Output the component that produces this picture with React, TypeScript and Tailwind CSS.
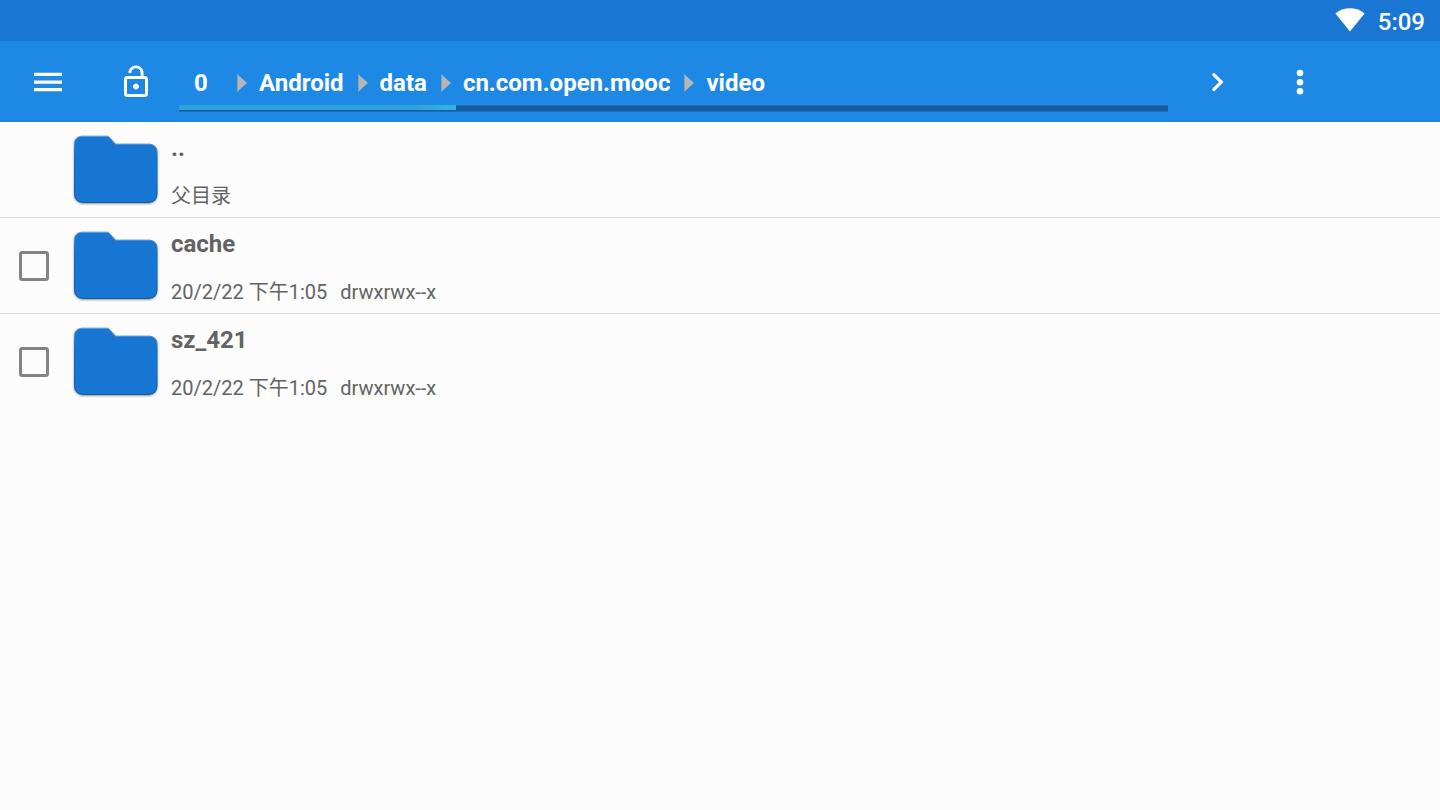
import { Fragment, useId, useState } from "react";

const crumbs = ["0", "Android", "data", "cn.com.open.mooc", "video"];

type Entry = { name: string; date?: string; mode?: string; note?: string };

const entries: Entry[] = [
  { name: "..", note: "父目录" },
  { name: "cache", date: "20/2/22 下午1:05", mode: "drwxrwx--x" },
  { name: "sz_421", date: "20/2/22 下午1:05", mode: "drwxrwx--x" },
];

function WifiIcon() {
  return (
    <svg className="h-6 w-8" viewBox="0 0 32 24" fill="#fff" aria-hidden="true">
      <path d="M1.4 5.6C5.4 2.1 10.5 0.3 16 0.3s10.6 1.8 14.6 5.3L16 23.4z" />
    </svg>
  );
}

function MenuIcon() {
  return (
    <svg className="h-9 w-9" viewBox="0 0 36 36" fill="#fff" aria-hidden="true">
      <path d="M4 8.7h28V12H4zM4 16.4h28v3.4H4zM4 24h28v3.3H4z" />
    </svg>
  );
}

function LockOpenIcon() {
  return (
    <svg className="h-9 w-9" viewBox="0 0 24 24" fill="#fff" aria-hidden="true">
      <path d="M12 17c1.1 0 2-.9 2-2s-.9-2-2-2-2 .9-2 2 .9 2 2 2zm6-9h-1V6c0-2.76-2.24-5-5-5S7 3.24 7 6h1.9c0-1.71 1.39-3.1 3.1-3.1 1.71 0 3.1 1.39 3.1 3.1v2H6c-1.1 0-2 .9-2 2v10c0 1.1.9 2 2 2h12c1.1 0 2-.9 2-2V10c0-1.1-.9-2-2-2zm0 12H6V10h12v10z" />
    </svg>
  );
}

function CrumbArrow() {
  return (
    <svg className="ml-[14px] mr-3 h-[18px] w-[10px] shrink-0" viewBox="0 0 10 18" aria-hidden="true">
      <path d="M0 0l10 9-10 9z" fill="#b4b6b8" />
      <path d="M0.5 0.5v17" stroke="#8f9fb0" strokeWidth="1" />
    </svg>
  );
}

function FolderIcon() {
  const id = useId();
  return (
    <svg className="h-[72px] w-[88px] shrink-0" viewBox="0 0 88 72" aria-hidden="true">
      <defs>
        <linearGradient id={`${id}edge`} x1="0" y1="0" x2="0" y2="1">
          <stop offset="0" stopColor="#5b9fe0" />
          <stop offset="0.3" stopColor="#1a6cc4" />
          <stop offset="1" stopColor="#135499" />
        </linearGradient>
        <filter id={`${id}shadow`} x="-5%" y="-5%" width="110%" height="115%">
          <feDropShadow dx="0" dy="1" stdDeviation="1" floodColor="#000" floodOpacity="0.4" />
        </filter>
      </defs>
      <path
        d="M9.500 2.200H35q1.300 0 2.200 1L43.600 10.200H78q7 1 7 8v41.500q0 8-8 8.800H10.500q-8-.8-8-8.800V10q0-7 7-7.800z"
        fill="#1976d2"
        stroke={`url(#${id}edge)`}
        strokeWidth="1"
        filter={`url(#${id}shadow)`}
      />
    </svg>
  );
}

function StatusBar() {
  return (
    <div className="flex h-[41px] items-center justify-end gap-3 bg-[#1976d2] pr-[15px]">
      <div className="pb-[2px]">
        <WifiIcon />
      </div>
      <span className="pt-[2px] text-2xl font-medium leading-7 text-white">5:09</span>
    </div>
  );
}

function Toolbar() {
  return (
    <header className="flex h-[81px] items-center bg-[#1e88e5] text-white">
      <button type="button" aria-label="Menu" className="flex h-full w-24 items-center justify-center">
        <MenuIcon />
      </button>
      <button type="button" aria-label="Lock" className="flex h-full w-20 items-center justify-center">
        <LockOpenIcon />
      </button>
      <div className="ml-[3px] flex h-full min-w-0 flex-1 flex-col justify-end pb-[10px]">
        <nav aria-label="Path" className="flex h-11 items-center whitespace-nowrap text-2xl font-bold">
          {crumbs.map((crumb, i) => (
            <Fragment key={crumb}>
              {i > 0 && <CrumbArrow />}
              <button type="button" className="min-w-11 text-center">
                {crumb}
              </button>
            </Fragment>
          ))}
        </nav>
        <div
          role="progressbar"
          aria-label="Storage used"
          aria-valuenow={28}
          aria-valuemin={0}
          aria-valuemax={100}
          className="h-[7px] border-y border-[#1a6fbd] bg-[#165d9f]"
        >
          <div className="-mt-px h-[5px] w-[28%] bg-linear-to-r from-[#2ea3d9] from-85% to-[#33b5e5]" />
        </div>
      </div>
      <button type="button" aria-label="Next" className="flex h-full w-[98px] items-center justify-center">
        <svg className="h-6 w-6" viewBox="0 0 24 24" fill="none" stroke="#fff" strokeWidth="3.200" strokeLinecap="round" aria-hidden="true">
          <path d="M8.800 4.700l7.500 7.400-7.500 7.400" />
        </svg>
      </button>
      <button type="button" aria-label="More options" className="mr-[106px] flex h-full w-[68px] items-center justify-center">
        <svg className="h-8 w-8" viewBox="0 0 32 32" fill="#fff" aria-hidden="true">
          <circle cx="16" cy="7" r="3.300" />
          <circle cx="16" cy="16.200" r="3.300" />
          <circle cx="16" cy="25.300" r="3.300" />
        </svg>
      </button>
    </header>
  );
}

function Row({ entry }: { entry: Entry }) {
  const [checked, setChecked] = useState(false);
  return (
    <li className="flex h-24 items-center border-b border-[#dadada] last:border-transparent">
      <div className="flex w-[72px] shrink-0 pl-[19px]">
        {!entry.note && (
          <input
            type="checkbox"
            aria-label={entry.name}
            checked={checked}
            onChange={(e) => setChecked(e.target.checked)}
            className="h-[30px] w-[30px] appearance-none rounded-[3px] border-3 border-[#848484] checked:bg-[#1976d2]"
          />
        )}
      </div>
      <FolderIcon />
      <div className="ml-[11px] flex h-full flex-col justify-between pb-[7px] pt-3 text-[#636363]">
        <span className="text-2xl font-bold leading-7">{entry.name}</span>
        <span className="flex gap-[13px] text-xl leading-7">
          {entry.note ? (
            <span>{entry.note}</span>
          ) : (
            <>
              <span>{entry.date}</span>
              <span>{entry.mode}</span>
            </>
          )}
        </span>
      </div>
    </li>
  );
}

export default function App() {
  return (
    <div className="min-h-screen bg-[#fcfcfc] font-['Roboto','Noto_Sans_CJK_SC',sans-serif]">
      <StatusBar />
      <Toolbar />
      <main>
        <ul>
          {entries.map((entry) => (
            <Row key={entry.name} entry={entry} />
          ))}
        </ul>
      </main>
    </div>
  );
}
